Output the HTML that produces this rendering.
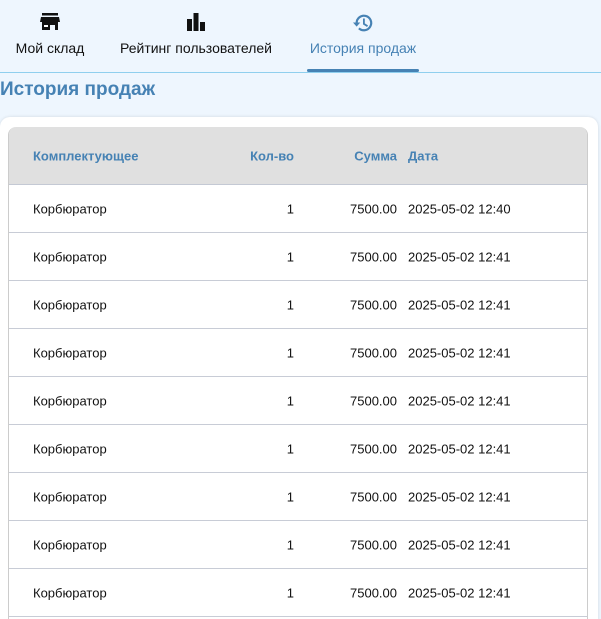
<!DOCTYPE html>
<html><head><meta charset="utf-8"><style>
*{margin:0;padding:0;box-sizing:border-box}
html,body{width:601px;height:619px;overflow:hidden}
body{background:#eef6fe;font-family:"Segoe UI","Liberation Sans","DejaVu Sans",sans-serif;position:relative}
.tabs{position:absolute;left:0;top:0;width:601px;height:73px;border-bottom:1px solid #8fcfee}
.tab{position:absolute;top:0;height:72px;text-align:center;font-size:14px;color:#111}
.tab svg{position:absolute;top:13px;left:50%;transform:translateX(-50%)}
.tab span{position:absolute;top:40px;left:0;right:0;white-space:nowrap}
.act{color:#4682b4}
.ul{position:absolute;left:307px;top:69px;width:112px;height:3px;background:#4682b4;border-radius:2px}
h1{position:absolute;left:0;top:79px;font-size:19px;font-weight:bold;color:#4682b4}
.card{position:absolute;left:0;top:117px;width:598px;height:520px;background:#fff;border-radius:10px;box-shadow:0 0 3px rgba(0,0,0,.12)}
.tbl{position:absolute;left:8px;top:127px;width:580px;height:500px;border-left:1px solid #ccc;border-right:1px solid #ccc;border-radius:8px 8px 0 0;overflow:hidden}
.hd{height:58px;background:#e0e0e0;border-bottom:1px solid #c4c9d4;position:relative;font-weight:bold;color:#4682b4;font-size:13px}
.row{height:48px;border-bottom:1px solid #c8ccd6;position:relative;font-size:13px;color:#111}
.c{position:absolute;top:50%;transform:translateY(-50%);white-space:nowrap}
.c1{left:24px}.c2{right:293px}.c3{right:190px}.c4{left:399px}
</style></head><body>
<div class="tabs">
<div class="tab" style="left:10px;width:80px"><svg width="20" height="18" viewBox="0 0 20 18"><rect x="2" y="0" width="16" height="2.5" fill="#111"/><path d="M1 4h18l1 5H0z" fill="#111"/><path d="M2 9h16v8h-3v-5H10v5H2z" fill="#111"/><rect x="4" y="12" width="4" height="2" fill="#fff"/></svg><span>Мой склад</span></div>
<div class="tab" style="left:116px;width:160px"><svg width="20" height="18" viewBox="0 0 20 18"><rect x="1" y="6" width="5" height="12" fill="#111"/><rect x="7.5" y="0" width="5" height="18" fill="#111"/><rect x="14" y="9" width="5" height="9" fill="#111"/></svg><span>Рейтинг пользователей</span></div>
<div class="tab act" style="left:303px;width:120px"><svg width="22" height="20" viewBox="0 0 24 22"><path d="M5 11a8 8 0 1 1 2.5 5.8" fill="none" stroke="#4682b4" stroke-width="2.4"/><path d="M1 10.5h8l-4 4.5z" fill="#4682b4"/><path d="M13 6v6l4 2.5" fill="none" stroke="#4682b4" stroke-width="2"/></svg><span>История продаж</span></div>
<div class="ul"></div>
</div>
<h1>История продаж</h1>
<div class="card"></div>
<div class="tbl">
<div class="hd"><div class="c c1">Комплектующее</div><div class="c c2">Кол-во</div><div class="c c3">Сумма</div><div class="c c4">Дата</div></div>
<div class="row"><div class="c c1">Корбюратор</div><div class="c c2">1</div><div class="c c3">7500.00</div><div class="c c4">2025-05-02 12:40</div></div>
<div class="row"><div class="c c1">Корбюратор</div><div class="c c2">1</div><div class="c c3">7500.00</div><div class="c c4">2025-05-02 12:41</div></div>
<div class="row"><div class="c c1">Корбюратор</div><div class="c c2">1</div><div class="c c3">7500.00</div><div class="c c4">2025-05-02 12:41</div></div>
<div class="row"><div class="c c1">Корбюратор</div><div class="c c2">1</div><div class="c c3">7500.00</div><div class="c c4">2025-05-02 12:41</div></div>
<div class="row"><div class="c c1">Корбюратор</div><div class="c c2">1</div><div class="c c3">7500.00</div><div class="c c4">2025-05-02 12:41</div></div>
<div class="row"><div class="c c1">Корбюратор</div><div class="c c2">1</div><div class="c c3">7500.00</div><div class="c c4">2025-05-02 12:41</div></div>
<div class="row"><div class="c c1">Корбюратор</div><div class="c c2">1</div><div class="c c3">7500.00</div><div class="c c4">2025-05-02 12:41</div></div>
<div class="row"><div class="c c1">Корбюратор</div><div class="c c2">1</div><div class="c c3">7500.00</div><div class="c c4">2025-05-02 12:41</div></div>
<div class="row"><div class="c c1">Корбюратор</div><div class="c c2">1</div><div class="c c3">7500.00</div><div class="c c4">2025-05-02 12:41</div></div>
</div>
</body></html>
